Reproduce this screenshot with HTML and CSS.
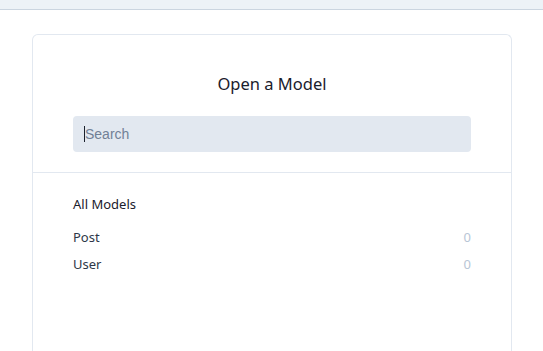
FILE: index.html
```html
<!DOCTYPE html>
<html>
<head>
<meta charset="utf-8">
<link rel="stylesheet" href="styles.css">
</head>
<body>
<div class="topbar"></div>
<main class="page">
  <section class="card">
    <header class="card-head">
      <h1 class="title">Open a Model</h1>
      <div class="search"><span class="caret"></span><span class="placeholder">Search</span></div>
    </header>
    <div class="card-body">
      <h2 class="group">All Models</h2>
      <ul class="models">
        <li class="model"><span class="name">Post</span><span class="count">0</span></li>
        <li class="model"><span class="name">User</span><span class="count">0</span></li>
      </ul>
    </div>
  </section>
</main>
</body>
</html>
```
FILE: styles.css
```css
* { box-sizing: border-box; }
html, body { margin: 0; padding: 0; background: #fff; }
body { font-family: "Noto Sans", "Open Sans", sans-serif; color: #1a202c; }
.topbar { height: 10px; background: #edf2f7; border-bottom: 1px solid #cbd5e0; }
.page { padding-top: 24px; padding-left: 32px; }
.card {
  width: 480px;
  height: 330px;
  border: 1px solid #e2e8f0;
  border-bottom: none;
  border-radius: 6px 6px 0 0;
  background: #fff;
}
.card-head {
  padding: 37px 40px 20px 40px;
  border-bottom: 1px solid #e2e8f0;
}
.title {
  margin: 0 0 20px;
  font-size: 16.5px;
  line-height: 24px;
  font-weight: 400;
  text-align: center;
  color: #1a202c;
}
.search {
  height: 36px;
  background: #e2e8f0;
  border-radius: 4px;
  display: flex;
  align-items: center;
  padding-left: 11px;
}
.caret { width: 1px; height: 16px; background: #1a202c; }
.placeholder {
  font-family: "Liberation Sans", Arial, sans-serif;
  font-size: 14px;
  color: #718096;
}
.card-body { padding: 21px 40px 0 40px; }
.group {
  margin: 0 0 10px;
  font-size: 13px;
  line-height: 20px;
  font-weight: 400;
  color: #1a202c;
}
.models { list-style: none; margin: 0; padding: 0; }
.model {
  display: flex;
  justify-content: space-between;
  font-size: 13px;
  line-height: 27px;
  color: #2d3748;
}
.count { color: #b8c6d6; }
```
